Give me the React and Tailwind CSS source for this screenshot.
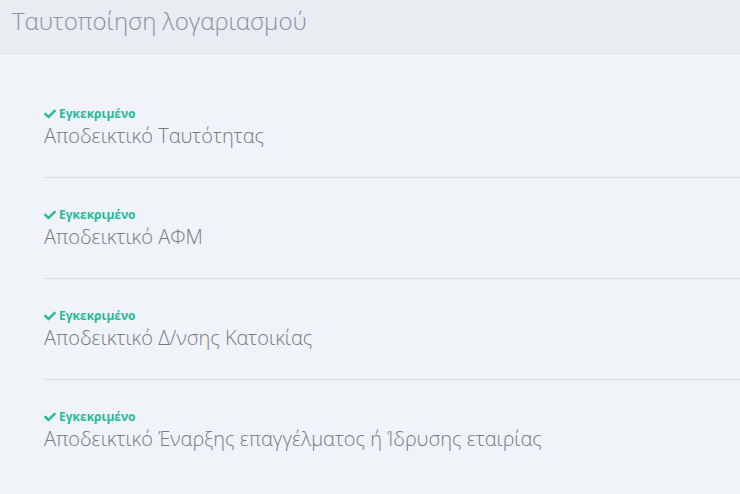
import React from "react";

const docs = [
  "Αποδεικτικό Ταυτότητας",
  "Αποδεικτικό ΑΦΜ",
  "Αποδεικτικό Δ/νσης Κατοικίας",
  "Αποδεικτικό Έναρξης επαγγέλματος ή Ίδρυσης εταιρίας",
];

const Check = () => (
  <svg viewBox="0 0 512 512" className="w-[12px] h-[12px] mr-[3px]" fill="#26b99a">
    <path d="M173.9 439.4l-166.4-166.4c-10-10-10-26.2 0-36.2l36.2-36.2c10-10 26.2-10 36.2 0L192 312.7 432.1 72.6c10-10 26.2-10 36.2 0l36.2 36.2c10 10 10 26.2 0 36.2l-294.4 294.4c-10 10-26.2 10-36.2 0z" />
  </svg>
);

const App = () => {
  return (
    <div className="w-[740px] h-[494px] bg-[#f0f3f8] overflow-hidden" style={{ fontFamily: '"Open Sans", sans-serif' }}>
      <header className="h-[54px] bg-[#e9ecf0] border-b border-[#dde1e6] px-[12px] flex items-center">
        <h1 className="text-[24px] font-light text-[#8693a4] pb-[12px]">Ταυτοποίηση λογαριασμού</h1>
      </header>
      <div className="pl-[44px] pt-[23px]">
        {docs.map((doc, i) => (
          <div key={doc} className={`pt-[29px] pb-[27px] ${i < docs.length - 1 ? "border-b border-[#d9dde2]" : ""}`}>
            <div className="flex items-center text-[12px] font-bold text-[#26b99a] leading-[16px]">
              <Check />
              Εγκεκριμένο
            </div>
            <p className="text-[20px] font-light text-[#757b84] leading-[28px]">{doc}</p>
          </div>
        ))}
      </div>
    </div>
  );
};

export default App;
